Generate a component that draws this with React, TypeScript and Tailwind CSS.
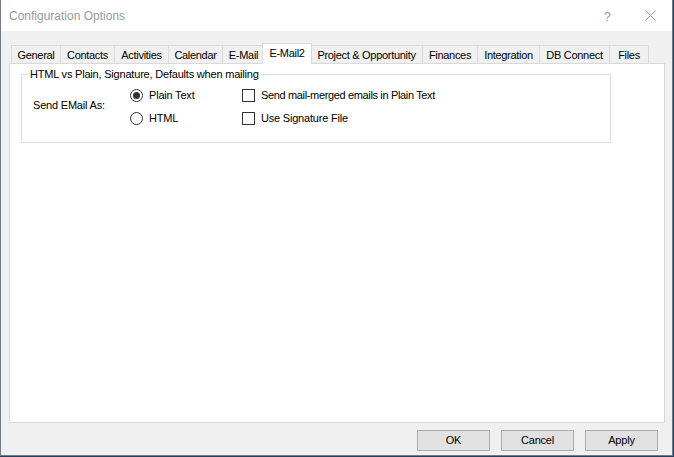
import React from 'react';

const tabs: { label: string; cls: string; sel?: boolean }[] = [
  { label: 'General', cls: 'w-[49px]' },
  { label: 'Contacts', cls: 'w-[54px]' },
  { label: 'Activities', cls: 'w-[54px]' },
  { label: 'Calendar', cls: 'w-[54px]' },
  { label: 'E-Mail', cls: 'w-[42px]' },
  { label: 'E-Mail2', cls: 'w-[50px]', sel: true },
  { label: 'Project & Opportunity', cls: 'w-[112px]' },
  { label: 'Finances', cls: 'w-[55px]' },
  { label: 'Integration', cls: 'w-[62px]' },
  { label: 'DB Connect', cls: 'w-[70px]' },
  { label: 'Files', cls: 'w-[40px] border-r' },
];

function Radio({ checked }: { checked?: boolean }) {
  return (
    <span className="flex h-[13px] w-[13px] items-center justify-center rounded-full border border-[#333333] bg-white">
      {checked && <span className="h-[7px] w-[7px] rounded-full bg-[#333333]" />}
    </span>
  );
}

function Check() {
  return <span className="block h-[13px] w-[13px] border border-[#333333] bg-white" />;
}

export default function App() {
  return (
    <div
      className="h-[457px] w-[674px] bg-[#24415f] text-[11px] leading-[13px] text-black"
      style={{ fontFamily: '"Liberation Sans", Arial, sans-serif' }}
    >
      <div className="flex h-[456px] w-[673px] flex-col border-b border-l border-r border-[#6f7b8a] bg-[#f0f0f0]">
        {/* title bar */}
        <div className="flex h-[31px] shrink-0 items-center bg-white pt-[2px]">
          <span className="ml-[8px] text-[12px] leading-[15px] text-[#999999]">Configuration Options</span>
          <span className="ml-auto mr-[34px] text-[13px] text-[#999999]">?</span>
          <svg width="11" height="11" viewBox="0 0 11 11" className="mb-[2px] mr-[16px]">
            <path d="M0.5 0.5 L10.5 10.5 M10.5 0.5 L0.5 10.5" stroke="#999999" strokeWidth="1" />
          </svg>
        </div>

        {/* tabs */}
        <div className="ml-[10px] mt-[12px] flex h-[20px] items-end">
          {tabs.map((t) =>
            t.sel ? (
              <div
                key={t.label}
                className={`relative z-10 -mx-[2px] -mb-px flex h-[21px] items-start justify-center border-l border-r border-t border-[#d9d9d9] bg-white pt-[3px] ${t.cls}`}
              >
                <span className="tracking-[-0.3px]">{t.label}</span>
              </div>
            ) : (
              <div
                key={t.label}
                className={`flex h-[18px] items-center justify-center border-l border-t border-[#d9d9d9] bg-[#f0f0f0] pt-px ${t.cls}`}
              >
                <span className="tracking-[-0.3px]">{t.label}</span>
              </div>
            )
          )}
        </div>

        {/* panel */}
        <div className="ml-[8px] h-[360px] w-[656px] border border-[#d9d9d9] bg-white">
          <fieldset className="ml-[11px] mt-[4px] h-[75px] w-[590px] border border-[#dcdcdc]">
            <legend className="ml-[6px] px-[2px] leading-[13px] tracking-[-0.2px]">
              HTML vs Plain, Signature, Defaults when mailing
            </legend>
            <div className="mt-[8px] flex pl-[11px]">
              <div className="w-[97px] pt-[10px] tracking-[-0.2px]">Send EMail As:</div>
              <div className="flex w-[112px] flex-col gap-[10px]">
                <div className="flex items-center gap-[6px]">
                  <Radio checked />
                  <span className="tracking-[-0.2px]">Plain Text</span>
                </div>
                <div className="flex items-center gap-[6px]">
                  <Radio />
                  <span className="tracking-[-0.2px]">HTML</span>
                </div>
              </div>
              <div className="flex flex-col gap-[10px]">
                <div className="flex items-center gap-[6px]">
                  <Check />
                  <span className="tracking-[-0.35px]">Send mail-merged emails in Plain Text</span>
                </div>
                <div className="flex items-center gap-[6px]">
                  <Check />
                  <span className="tracking-[-0.2px]">Use Signature File</span>
                </div>
              </div>
            </div>
          </fieldset>
        </div>

        {/* buttons */}
        <div className="mr-[14px] mt-[7px] flex justify-end gap-[11px]">
          {['OK', 'Cancel', 'Apply'].map((b) => (
            <button
              key={b}
              className="flex h-[21px] w-[73px] items-center justify-center border border-[#adadad] bg-[#e1e1e1] text-[11px] tracking-[-0.2px]"
              style={{ fontFamily: '"Liberation Sans", Arial, sans-serif' }}
            >
              {b}
            </button>
          ))}
        </div>
      </div>
    </div>
  );
}
